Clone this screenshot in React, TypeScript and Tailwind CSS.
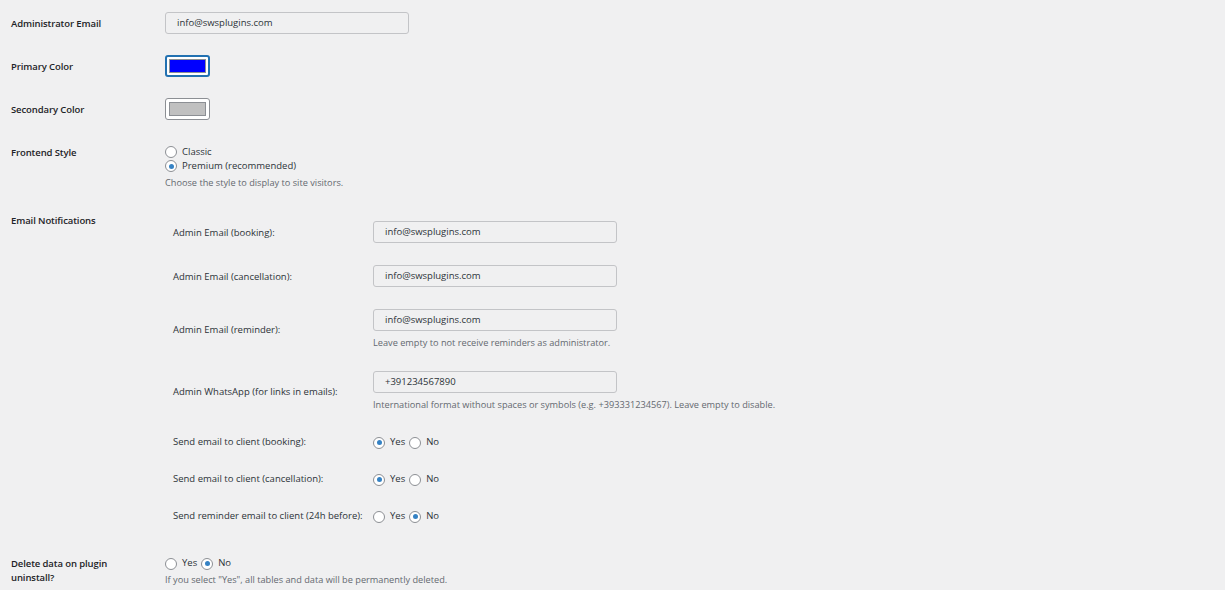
import React from "react";

const font = { fontFamily: '"Open Sans", "Noto Sans", Arial, sans-serif' };

function Radio({ checked }: { checked?: boolean }) {
  return (
    <span className="inline-flex h-[12px] w-[12px] shrink-0 items-center justify-center rounded-full border border-[#8c8f94] bg-white">
      {checked && <span className="h-[5px] w-[5px] rounded-full bg-[#3582c4]" />}
    </span>
  );
}

function YesNo({ yes }: { yes: boolean }) {
  return (
    <div className="flex h-[15px] items-center text-[9.5px] text-[#2c3338]">
      <Radio checked={yes} />
      <span className="ml-[5px] mr-[4px]">Yes</span>
      <Radio checked={!yes} />
      <span className="ml-[5px]">No</span>
    </div>
  );
}

function TextInput({ value }: { value: string }) {
  return (
    <div className="flex h-[22px] w-[244px] items-center rounded-[3px] border border-[#c3c4c7] bg-[#f0f0f1] pl-[11px] text-[9.5px] text-[#2c3338]">
      {value}
    </div>
  );
}

function Help({ children, tight }: { children: React.ReactNode; tight?: boolean }) {
  return (
    <p className={`${tight ? "mt-[3px]" : "mt-[5px]"} text-[9.2px] leading-[13px] text-[#646970]`}>{children}</p>
  );
}

function Label({ children }: { children: React.ReactNode }) {
  return (
    <div className="w-[154px] shrink-0 pt-[5px] text-[9.5px] font-semibold leading-[13px] tracking-[-0.1px] text-[#1d2327]">
      {children}
    </div>
  );
}

function SubRow({
  label,
  children,
  input,
  first,
}: {
  label: string;
  children: React.ReactNode;
  input?: boolean;
  first?: boolean;
}) {
  return (
    <div className={`flex items-center ${first ? "pt-[13px] pb-[11px]" : "py-[11px]"}`}>
      <div className={`w-[208px] shrink-0 pl-[8px] text-[9.5px] text-[#2c3338] ${input ? "pt-[3px]" : ""}`}>{label}</div>
      <div>{children}</div>
    </div>
  );
}

export default function App() {
  return (
    <div style={font} className="min-h-[590px] w-[1225px] bg-[#f0f0f1] pl-[11px] pt-[12px]">
      <div className="flex h-[43px]">
        <Label>Administrator Email</Label>
        <TextInput value="info@swsplugins.com" />
      </div>
      <div className="flex h-[43px]">
        <Label>Primary Color</Label>
        <div className="flex h-[22px] w-[45px] items-center justify-center rounded-[3px] border-2 border-[#2271b1] bg-white">
          <div className="h-[14px] w-[37px] border border-[#8c8f94] bg-[#0000ff]" />
        </div>
      </div>
      <div className="flex h-[43px]">
        <Label>Secondary Color</Label>
        <div className="flex h-[22px] w-[45px] items-center justify-center rounded-[3px] border border-[#8c8f94] bg-white">
          <div className="h-[14px] w-[37px] border border-[#8c8f94] bg-[#c0c0c0]" />
        </div>
      </div>
      <div className="flex h-[69px]">
        <Label>Frontend Style</Label>
        <div className="pt-[4px] text-[9.5px] text-[#2c3338]">
          <div className="flex h-[14px] items-center gap-[5px]">
            <Radio />
            <span>Classic</span>
          </div>
          <div className="flex h-[14px] items-center gap-[5px]">
            <Radio checked />
            <span>Premium (recommended)</span>
          </div>
          <Help tight>Choose the style to display to site visitors.</Help>
        </div>
      </div>
      <div className="flex">
        <div className="w-[154px] shrink-0 pt-[4px] text-[9.5px] font-semibold leading-[13px] tracking-[-0.1px] text-[#1d2327]">
          Email Notifications
        </div>
        <div>
          <SubRow input label="Admin Email (booking):">
            <TextInput value="info@swsplugins.com" />
          </SubRow>
          <SubRow input label="Admin Email (cancellation):">
            <TextInput value="info@swsplugins.com" />
          </SubRow>
          <SubRow input label="Admin Email (reminder):">
            <TextInput value="info@swsplugins.com" />
            <Help>Leave empty to not receive reminders as administrator.</Help>
          </SubRow>
          <SubRow input label="Admin WhatsApp (for links in emails):">
            <TextInput value="+391234567890" />
            <Help>International format without spaces or symbols (e.g. +393331234567). Leave empty to disable.</Help>
          </SubRow>
          <SubRow first label="Send email to client (booking):">
            <YesNo yes />
          </SubRow>
          <SubRow label="Send email to client (cancellation):">
            <YesNo yes />
          </SubRow>
          <SubRow label="Send reminder email to client (24h before):">
            <YesNo yes={false} />
          </SubRow>
        </div>
      </div>
      <div className="flex pt-[21px]">
        <div className="w-[154px] shrink-0 pr-[40px] pt-[1px] text-[9.5px] font-semibold leading-[14px] tracking-[-0.1px] text-[#1d2327]">
          Delete data on plugin uninstall?
        </div>
        <div>
          <YesNo yes={false} />
          <p className="mt-[2px] text-[9.2px] leading-[13px] text-[#646970]">
            If you select "Yes", all tables and data will be permanently deleted.
          </p>
        </div>
      </div>
    </div>
  );
}
